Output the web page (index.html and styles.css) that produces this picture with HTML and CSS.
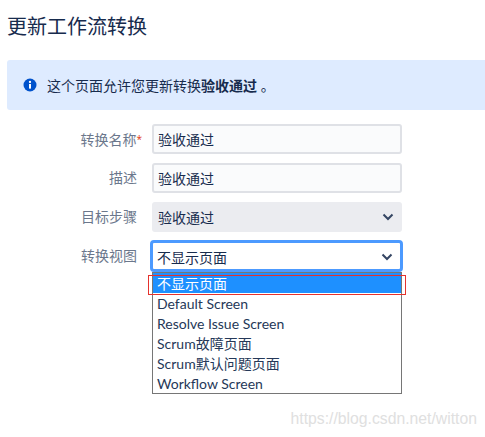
FILE: index.html
```html
<!doctype html>
<html lang="zh">
<head>
    <meta charset="UTF-8">
    <title>更新工作流转换</title>
    <link rel="stylesheet" href="styles.css">
</head>
<body>
<div class="page">
    <h2 class="title">更新工作流转换</h2>

    <div class="banner">
        <svg class="banner_icon" width="16" height="16" viewBox="0 0 16 16">
            <circle cx="8" cy="8" r="6.5" fill="#0052cc"/>
            <rect x="7" y="7" width="2" height="4.6" fill="#fff"/>
            <circle cx="8" cy="5" r="1.15" fill="#fff"/>
        </svg>
        <span>这个页面允许您更新转换<b class="banner_name">验收通过</b> 。</span>
    </div>

    <div class="form">
        <div class="row">
            <label class="row_label">转换名称<span class="required">*</span></label>
            <div class="field field-input">验收通过</div>
        </div>
        <div class="row">
            <label class="row_label">描述</label>
            <div class="field field-input">验收通过</div>
        </div>
        <div class="row row-select">
            <label class="row_label">目标步骤</label>
            <div class="field field-select">
                <span>验收通过</span>
                <svg class="chevron" width="12" height="8" viewBox="0 0 12 8">
                    <path d="M1.5 1.5 6 6l4.5-4.5" fill="none" stroke="#344563" stroke-width="2"/>
                </svg>
            </div>
        </div>
        <div class="row row-focus">
            <label class="row_label">转换视图</label>
            <div class="field field-focus">
                <span>不显示页面</span>
                <svg class="chevron" width="12" height="8" viewBox="0 0 12 8">
                    <path d="M1.5 1.5 6 6l4.5-4.5" fill="none" stroke="#344563" stroke-width="2"/>
                </svg>
            </div>
        </div>
        <div class="list_wrap">
            <ul class="list">
                <li class="list_item list_item-selected">不显示页面</li>
                <li class="list_item">Default Screen</li>
                <li class="list_item">Resolve Issue Screen</li>
                <li class="list_item">Scrum故障页面</li>
                <li class="list_item">Scrum默认问题页面</li>
                <li class="list_item">Workflow Screen</li>
            </ul>
            <div class="mark"></div>
        </div>
    </div>
    <div class="watermark">https://blog.csdn.net/witton</div>
</div>
</body>
</html>
```

FILE: styles.css
```css
* {
    box-sizing: border-box;
}

html, body {
    margin: 0;
    padding: 0;
}

body {
    width: 485px;
    height: 437px;
    overflow: hidden;
    background: #fff;
    color: #172b4d;
    font-family: "Open Sans", "Noto Sans CJK SC", sans-serif;
    font-size: 14px;
}

.page {
    position: relative;
    height: 437px;
    padding: 13px 0 0 7px;
}

.title {
    margin: 0;
    font-size: 20px;
    font-weight: 400;
    line-height: 28px;
}

.banner {
    display: flex;
    align-items: center;
    gap: 9px;
    height: 50px;
    margin-top: 19px;
    padding: 0 0 0 15px;
    background: #deebff;
    border-radius: 3px 0 0 3px;
}

.banner_icon {
    flex: none;
}

.banner_name {
    font-weight: 700;
}

.form {
    padding: 14px 0 0 0;
}

.row {
    display: flex;
    margin-bottom: 9px;
}

.row_label {
    width: 130px;
    padding-top: 5px;
    color: #6b778c;
    line-height: 20px;
    text-align: right;
    white-space: nowrap;
}

.required {
    margin-right: -5px;
    color: #de350b;
    font-size: 10px;
    vertical-align: 2px;
}

.field {
    display: flex;
    align-items: center;
    justify-content: space-between;
    width: 250px;
    height: 30px;
    margin-left: 15px;
    padding: 0 6px;
    border-radius: 3px;
}

.field-input {
    background: #fafbfc;
    border: 2px solid #dfe1e6;
    padding: 0 4px 1px;
}

.row-select {
    margin-bottom: 8px;
}

.field-select {
    background: #ebecf0;
}

.chevron {
    margin-right: 2px;
}

.row-focus {
    margin-bottom: 0;
}

.row-focus .row_label {
    padding-top: 6px;
}

.field-focus {
    width: 253px;
    height: 32px;
    margin-left: 13px;
    padding: 2px 5px 0 4px;
    background: #fff;
    border: 3px solid #4c9aff;
    border-radius: 4px;
}

.list_wrap {
    position: relative;
    width: 250px;
    margin-left: 145px;
}

.list {
    margin: 0;
    padding: 0;
    list-style: none;
    background: #fff;
    border: 1px solid #767676;
    font-family: "Lato", "Noto Sans CJK SC", sans-serif;
}

.list_item {
    height: 20px;
    padding: 1px 0 0 4px;
    line-height: 20px;
    color: #253858;
}

.list_item-selected {
    background: #1e90ff;
    color: #fff;
}

.mark {
    position: absolute;
    left: -4px;
    top: 3px;
    width: 258px;
    height: 20px;
    border: 1px solid #e5322d;
}

.watermark {
    position: absolute;
    right: 8px;
    top: 410px;
    color: #e0e0e0;
    font-family: "Liberation Sans", sans-serif;
    font-size: 15.75px;
    line-height: 18px;
}
```
